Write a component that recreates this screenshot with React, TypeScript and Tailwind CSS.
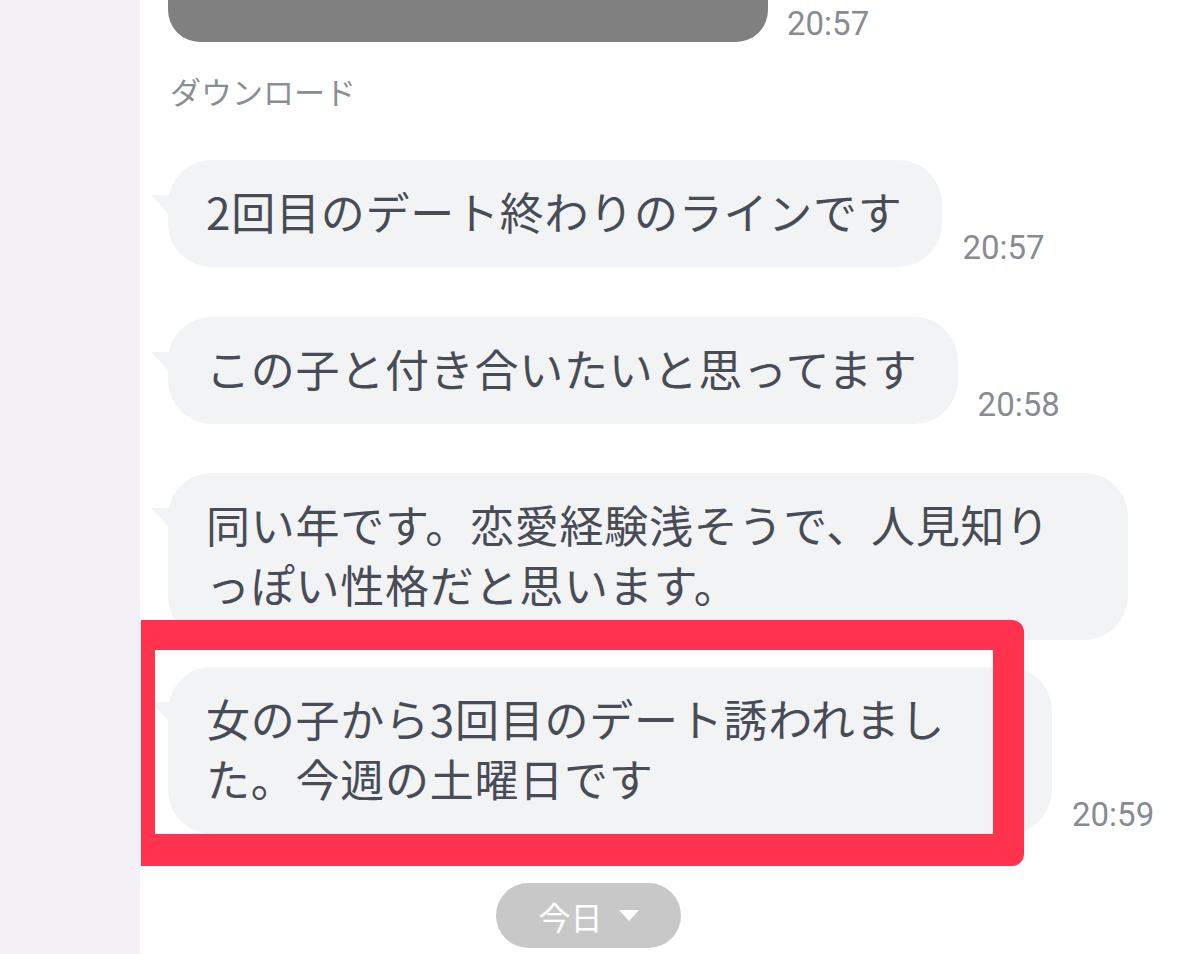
import React from "react";

const JP = { fontFamily: '"Noto Sans CJK JP", "Noto Sans", sans-serif' };
const NUM = { fontFamily: 'Roboto, "Noto Sans", sans-serif' };

function Tail() {
  return (
    <svg
      className="absolute left-[-17px] top-[35px]"
      width="26"
      height="28"
      viewBox="0 0 26 28"
    >
      <path d="M0 0 L26 0 L26 28 Z" fill="#f2f3f5" />
    </svg>
  );
}

function Bubble({
  children,
  time,
  width,
}: {
  children: React.ReactNode;
  time?: string;
  width?: string;
}) {
  return (
    <div className="flex items-end gap-[20px]">
      <div
        className={`relative rounded-[44px] bg-[#f2f3f5] pl-[38px] pr-[40px] pt-[21px] pb-[26px] text-[44px] leading-[60px] tracking-[0.75px] text-[#474c55] whitespace-nowrap ${width ?? ""}`}
        style={JP}
      >
        <Tail />
        {children}
      </div>
      {time && (
        <div
          className="mb-[1px] text-[33px] leading-[36px] text-[#878c93]"
          style={NUM}
        >
          {time}
        </div>
      )}
    </div>
  );
}

export default function App() {
  return (
    <div className="flex h-[954px] w-[1179px] overflow-hidden bg-white">
      <div className="h-full w-[140px] shrink-0 bg-[#f4f1f6]" />
      <div className="relative flex-1 pl-[28px]">
        <div className="flex items-start gap-[19px]">
          <div className="h-[42px] w-[600px] rounded-b-[32px] bg-[#808080]" />
          <div
            className="mt-[6px] text-[33px] leading-[36px] text-[#878c93]"
            style={NUM}
          >
            20:57
          </div>
        </div>
        <div
          className="mt-[31px] pl-[2px] text-[31px] leading-[36px] text-[#8a8f95]"
          style={JP}
        >
          ダウンロード
        </div>
        <div className="mt-[51px]">
          <Bubble time="20:57">2回目のデート終わりのラインです</Bubble>
        </div>
        <div className="mt-[50px]">
          <Bubble time="20:58">この子と付き合いたいと思ってます</Bubble>
        </div>
        <div className="mt-[49px]">
          <Bubble width="w-[960px]">
            同い年です。恋愛経験浅そうで、人見知り
            <br />
            っぽい性格だと思います。
          </Bubble>
        </div>
        <div className="mt-[27px]">
          <Bubble time="20:59" width="w-[884px]">
            女の子から3回目のデート誘われまし
            <br />
            た。今週の土曜日です
          </Bubble>
        </div>
        <div className="mt-[49px] flex justify-center pr-[170px]">
          <div
            className="flex h-[65px] w-[185px] items-center justify-center gap-[16px] rounded-full bg-[#c8c8c8] text-[32px] text-white"
            style={JP}
          >
            <span>今日</span>
            <svg width="20" height="12" viewBox="0 0 20 12">
              <path d="M0 0 L20 0 L10 11 Z" fill="#ffffff" />
            </svg>
          </div>
        </div>
        <div className="pointer-events-none absolute left-[1px] top-[620px] h-[246px] w-[883px] rounded-r-[12px] border-t-[30px] border-l-[14px] border-r-[31px] border-b-[32px] border-[#ff334d]" />
      </div>
    </div>
  );
}
